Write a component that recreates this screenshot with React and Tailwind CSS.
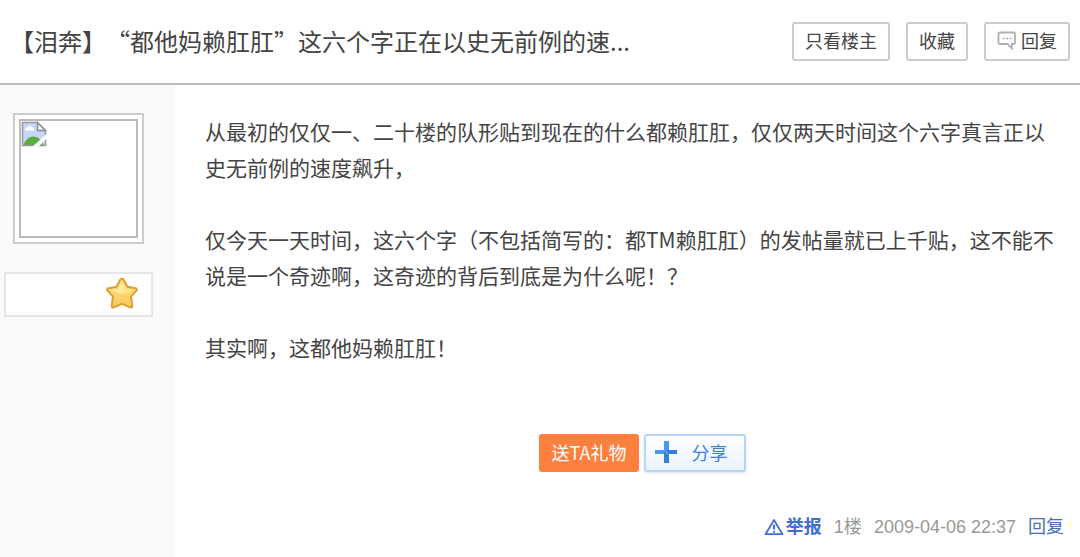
const post = {
  title: '【泪奔】“都他妈赖肛肛”这六个字正在以史无前例的速...',
  paragraphs: [
    '从最初的仅仅一、二十楼的队形贴到现在的什么都赖肛肛，仅仅两天时间这个六字真言正以史无前例的速度飙升，',
    '仅今天一天时间，这六个字（不包括简写的：都TM赖肛肛）的发帖量就已上千贴，这不能不说是一个奇迹啊，这奇迹的背后到底是为什么呢！？',
    '其实啊，这都他妈赖肛肛！',
  ],
  floor: '1楼',
  time: '2009-04-06 22:37',
};

function CommentIcon() {
  return (
    <svg width="20" height="20" viewBox="0 0 20 20" fill="none" aria-hidden="true">
      <path
        d="M3 2.500h13.500a1.500 1.500 0 0 1 1.500 1.500v8.500a1.500 1.500 0 0 1-1.500 1.500H14.800V18.500L10.500 14H3A1.500 1.500 0 0 1 1.500 12.500V4A1.500 1.500 0 0 1 3 2.500z"
        stroke="#b0b0b0"
        strokeWidth="1.800"
      />
      <path d="M5.500 8.500h2M9 8.500h2M12.500 8.500h2" stroke="#b0b0b0" strokeWidth="1.400" />
    </svg>
  );
}

function BrokenImageIcon() {
  return (
    <svg width="26" height="26" viewBox="0 0 26 26" aria-hidden="true">
      <path d="M1.500 1.500H17L24.500 9v15.500h-23z" fill="#c5d6f8" />
      <path d="M4 9.500a2 2 0 0 1 1.500-2.500 3.500 3.500 0 0 1 6-.5A2 2 0 0 1 13 9.500z" fill="#fff" />
      <path d="M2.500 24c2-5.500 5.500-8.500 10-8.500s8 3.500 10 8.500z" fill="#5aab3c" />
      <path d="M16.500 1.500v8h8z" fill="#f4f4f4" stroke="#8d8d8d" strokeWidth="1.500" />
      <path d="M1.500 24.500v-23h15l8 8v15z" fill="none" stroke="#999" strokeWidth="1.500" />
      <path d="M11 26L26 12.500v5L17 26z" fill="#fff" />
    </svg>
  );
}

function StarIcon() {
  return (
    <svg width="32" height="32" viewBox="0 0 32 32" aria-hidden="true">
      <defs>
        <linearGradient id="star" x1="0" y1="0" x2="0" y2="1">
          <stop offset="0" stopColor="#ffe27a" />
          <stop offset="1" stopColor="#fcc860" />
        </linearGradient>
      </defs>
      <path
        d="M16 1.500c.8 0 1.300.6 1.700 1.300l3.800 7 8 1.400c1.500.3 1.800 1.700.8 2.700l-5.300 5.800 1.300 9c.2 1.600-.9 2.200-2.200 1.600L16 26.800l-8.100 3.500c-1.300.6-2.400 0-2.200-1.600l1.300-9-5.300-5.800c-1-1-.7-2.400.8-2.700l8-1.400 3.800-7c.4-.7.9-1.300 1.700-1.300z"
        fill="url(#star)"
        stroke="#d9a03c"
        strokeWidth="2"
        strokeLinejoin="round"
      />
      <path d="M16 4l3.700 8.300 8.300 1L16 17 4 13.300l8.300-1z" fill="#fff3a8" opacity=".5" />
      <path d="M16 4v13L4 13.300l8.300-1z" fill="#fff" opacity=".2" />
    </svg>
  );
}

function PlusIcon() {
  return (
    <svg width="24" height="24" viewBox="0 0 24 24" aria-hidden="true">
      <path d="M10 1h5v9h-5zM1 10h9v4H1z" fill="#4a98ea" />
      <path d="M15 10h8v4h-8zM10 10h5v13h-5z" fill="#347fd8" />
      <path d="M10.500 10.500L14 14" stroke="#8fc0f5" />
    </svg>
  );
}

function WarningIcon() {
  return (
    <svg width="20" height="18" viewBox="0 0 20 18" fill="none" aria-hidden="true">
      <path d="M10 2L18.500 16.200h-17z" stroke="#3f6ed3" strokeWidth="1.700" strokeLinejoin="round" />
      <path d="M10 6.500v5M10 13v1.800" stroke="#3f6ed3" strokeWidth="1.900" />
    </svg>
  );
}

function HeaderButton({ children }) {
  return (
    <button
      type="button"
      className="flex h-[39px] shrink-0 items-center gap-1 rounded-[3px] border-2 border-[#ccc] bg-white px-[11px] pb-[3px] text-lg text-[#444]"
    >
      {children}
    </button>
  );
}

function Sidebar() {
  return (
    <aside className="w-[175px] shrink-0 bg-[#fafafd] pt-7">
      <a href="#author" aria-label="楼主" className="ml-[13px] block size-[131px] border-2 border-[#ccc] bg-white p-1">
        <span className="block size-full border-2 border-[#bbb]">
          <BrokenImageIcon />
        </span>
      </a>
      <div className="mt-7 mr-[22px] ml-1 flex h-[45px] items-center justify-end border-2 border-[#e6e6e6] bg-white pr-[13px] pb-1">
        <StarIcon />
      </div>
    </aside>
  );
}

export default function App() {
  return (
    <div className="flex min-h-screen flex-col bg-white font-['Noto_Sans_CJK_SC',sans-serif] text-[#444]" lang="zh-CN">
      <header className="flex items-center justify-between gap-4 border-b-2 border-[#bbb] py-[22px] pr-[10px] pl-[10px]">
        <h1 className="truncate pb-[2px] text-2xl leading-9 font-normal [text-spacing-trim:space-all]">{post.title}</h1>
        <div className="flex shrink-0 gap-4">
          <HeaderButton>只看楼主</HeaderButton>
          <HeaderButton>收藏</HeaderButton>
          <HeaderButton>
            <CommentIcon />
            回复
          </HeaderButton>
        </div>
      </header>

      <div className="flex flex-1">
        <Sidebar />
        <main className="flex min-w-0 flex-1 flex-col">
          <article className="flex flex-col gap-9 pt-7 pr-[22px] pl-[30px] text-[21px] leading-9">
            {post.paragraphs.map((text) => (
              <p key={text}>{text}</p>
            ))}
          </article>

          <div className="mt-[69px] flex justify-center gap-[5px] pl-[30px]">
            <button type="button" className="h-[38px] rounded-[3px] bg-[#ff7f3e] px-[13px] pb-[3px] text-lg text-white">
              送TA礼物
            </button>
            <button
              type="button"
              className="flex h-[38px] items-center gap-[13px] rounded-[3px] border-2 border-[#b5d5fa] bg-linear-to-b from-white to-[#eaf3fe] px-2 pr-[17px] pb-[2px] text-lg text-[#3f83d6] shadow-sm"
            >
              <PlusIcon />
              分享
            </button>
          </div>

          <footer className="mt-auto flex items-center justify-end gap-3 pr-4 pb-4 font-['Liberation_Sans','Noto_Sans_CJK_SC',sans-serif] text-lg text-[#999]">
            <a href="#report" className="flex items-center gap-[2px] font-bold text-[#3f6ed3]">
              <WarningIcon />
              举报
            </a>
            <span>{post.floor}</span>
            <time>{post.time}</time>
            <a href="#reply" className="text-[#4a6fb8]">
              回复
            </a>
          </footer>
        </main>
      </div>
    </div>
  );
}
